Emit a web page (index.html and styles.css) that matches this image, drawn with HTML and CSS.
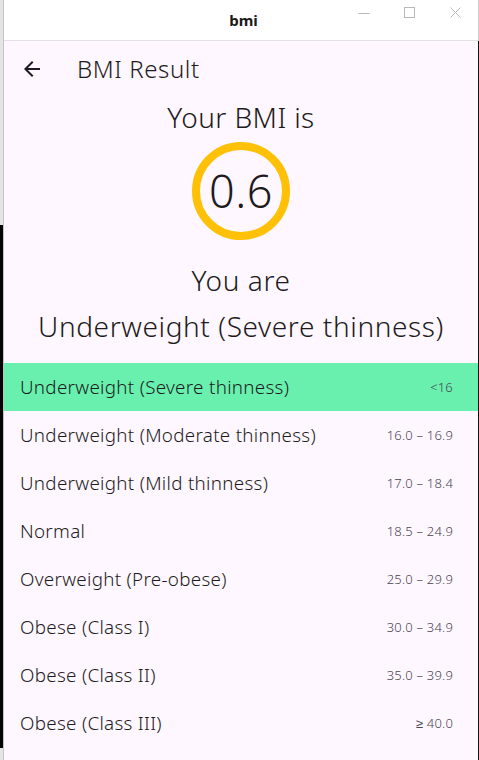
FILE: index.html
```html
<!DOCTYPE html>
<html lang="en">
<head>
<meta charset="utf-8">
<title>bmi</title>
<link rel="stylesheet" href="styles.css">
</head>
<body>
<div class="frame">
  <div class="edge-left">
    <span class="seg seg-light"></span>
    <span class="seg seg-dark"></span>
    <span class="seg seg-rest"></span>
  </div>
  <div class="window">
    <header class="titlebar">
      <span class="spacer"></span>
      <span class="win-title">bmi</span>
      <div class="controls">
        <span class="ctrl">
          <svg width="12" height="12" viewBox="0 0 12 12"><path d="M0.5 6.5h11" stroke="#b8b8b8" stroke-width="1"/></svg>
        </span>
        <span class="ctrl">
          <svg width="12" height="12" viewBox="0 0 12 12"><rect x="0.5" y="0.5" width="10" height="10" fill="none" stroke="#b8b8b8" stroke-width="1"/></svg>
        </span>
        <span class="ctrl">
          <svg width="12" height="12" viewBox="0 0 12 12"><path d="M0.5 0.5l10 10M10.5 0.5l-10 10" stroke="#b8b8b8" stroke-width="1"/></svg>
        </span>
      </div>
    </header>
    <main class="app">
      <div class="appbar">
        <span class="leading">
          <svg width="24" height="24" viewBox="0 0 24 24"><path d="M20 11H7.83l5.59-5.59L12 4l-8 8 8 8 1.41-1.41L7.83 13H20v-2z" fill="#1d1b20"/></svg>
        </span>
        <h1 class="appbar-title">BMI Result</h1>
      </div>
      <section class="result">
        <p class="headline">Your BMI is</p>
        <div class="ring"><span class="value">0.6</span></div>
        <p class="verdict">You are<br>Underweight (Severe thinness)</p>
      </section>
      <ul class="ranges">
        <li class="row row-active"><span class="label">Underweight (Severe thinness)</span><span class="range">&lt;16</span></li>
        <li class="row"><span class="label">Underweight (Moderate thinness)</span><span class="range">16.0 – 16.9</span></li>
        <li class="row"><span class="label">Underweight (Mild thinness)</span><span class="range">17.0 – 18.4</span></li>
        <li class="row"><span class="label">Normal</span><span class="range">18.5 – 24.9</span></li>
        <li class="row"><span class="label">Overweight (Pre-obese)</span><span class="range">25.0 – 29.9</span></li>
        <li class="row"><span class="label">Obese (Class I)</span><span class="range">30.0 – 34.9</span></li>
        <li class="row"><span class="label">Obese (Class II)</span><span class="range">35.0 – 39.9</span></li>
        <li class="row"><span class="label">Obese (Class III)</span><span class="range">≥ 40.0</span></li>
      </ul>
    </main>
  </div>
  <div class="edge-right">
    <span class="seg seg-rtop"></span>
    <span class="seg seg-rrest"></span>
  </div>
</div>
</body>
</html>
```

FILE: styles.css
```css
* { box-sizing: border-box; }
html, body { margin: 0; padding: 0; }
body {
  width: 479px;
  height: 760px;
  overflow: hidden;
  font-family: "Noto Sans", "DejaVu Sans", sans-serif;
  font-weight: 300;
  color: #1d1b20;
  background: #fef7ff;
}
.frame {
  display: flex;
  height: 760px;
}
.edge-left {
  width: 3px;
  display: flex;
  flex-direction: column;
}
.seg { display: block; }
.seg-light { height: 225px; background: #e4e4e4; }
.seg-dark { height: 523px; background: #050505; }
.seg-rest { flex: 1; background: #e4e4e4; }
.edge-right {
  width: 1px;
  display: flex;
  flex-direction: column;
}
.seg-rtop { height: 41px; background: #cfcfcf; }
.seg-rrest { flex: 1; background: #101010; }

.window {
  flex: 1;
  display: flex;
  flex-direction: column;
  border-left: 1px solid #c4c4c4;
  min-width: 0;
}
.titlebar {
  height: 41px;
  flex: none;
  background: #ffffff;
  border-bottom: 1px solid #e2e2e2;
  display: grid;
  grid-template-columns: 1fr auto 1fr;
  align-items: center;
}
.win-title {
  font-family: "Noto Sans", sans-serif;
  font-weight: 700;
  font-size: 15px;
  color: #1a1a1a;
  padding-left: 5px;
}
.controls {
  justify-self: end;
  display: flex;
  align-self: start;
  padding-top: 7px;
  padding-right: 16px;
  gap: 34px;
}
.ctrl { display: flex; width: 12px; height: 12px; }

.app {
  flex: 1;
  background: #fef7ff;
  display: flex;
  flex-direction: column;
}
.appbar {
  height: 56px;
  display: flex;
  align-items: center;
  padding-left: 16px;
}
.leading { display: flex; width: 24px; height: 24px; }
.appbar-title {
  margin: 0 0 0 33px;
  font-size: 24px;
  font-weight: 300;
  line-height: 28px;
  letter-spacing: 0.6px;
}
.result {
  display: flex;
  flex-direction: column;
  align-items: center;
  padding-top: 2px;
}
.headline {
  margin: 0;
  font-size: 28px;
  line-height: 36px;
  letter-spacing: 0.4px;
}
.ring {
  margin-top: 7px;
  width: 98px;
  height: 98px;
  border-radius: 50%;
  border: 8px solid #ffc107;
  display: flex;
  align-items: center;
  justify-content: center;
}
.value {
  font-size: 45px;
  line-height: 52px;
  letter-spacing: 0.5px;
}
.verdict {
  margin: 17px 0 0;
  font-size: 28px;
  line-height: 46px;
  text-align: center;
  letter-spacing: 0.6px;
}
.ranges {
  list-style: none;
  margin: 14px 0 0;
  padding: 0;
}
.row {
  height: 48px;
  display: flex;
  align-items: center;
  justify-content: space-between;
  padding: 0 25px 0 16px;
}
.row-active { background: #69f0ae; }
.label { font-size: 18.8px; letter-spacing: 0.3px; }
.range { font-size: 13px; color: #49454f; letter-spacing: 0.2px; }
```
